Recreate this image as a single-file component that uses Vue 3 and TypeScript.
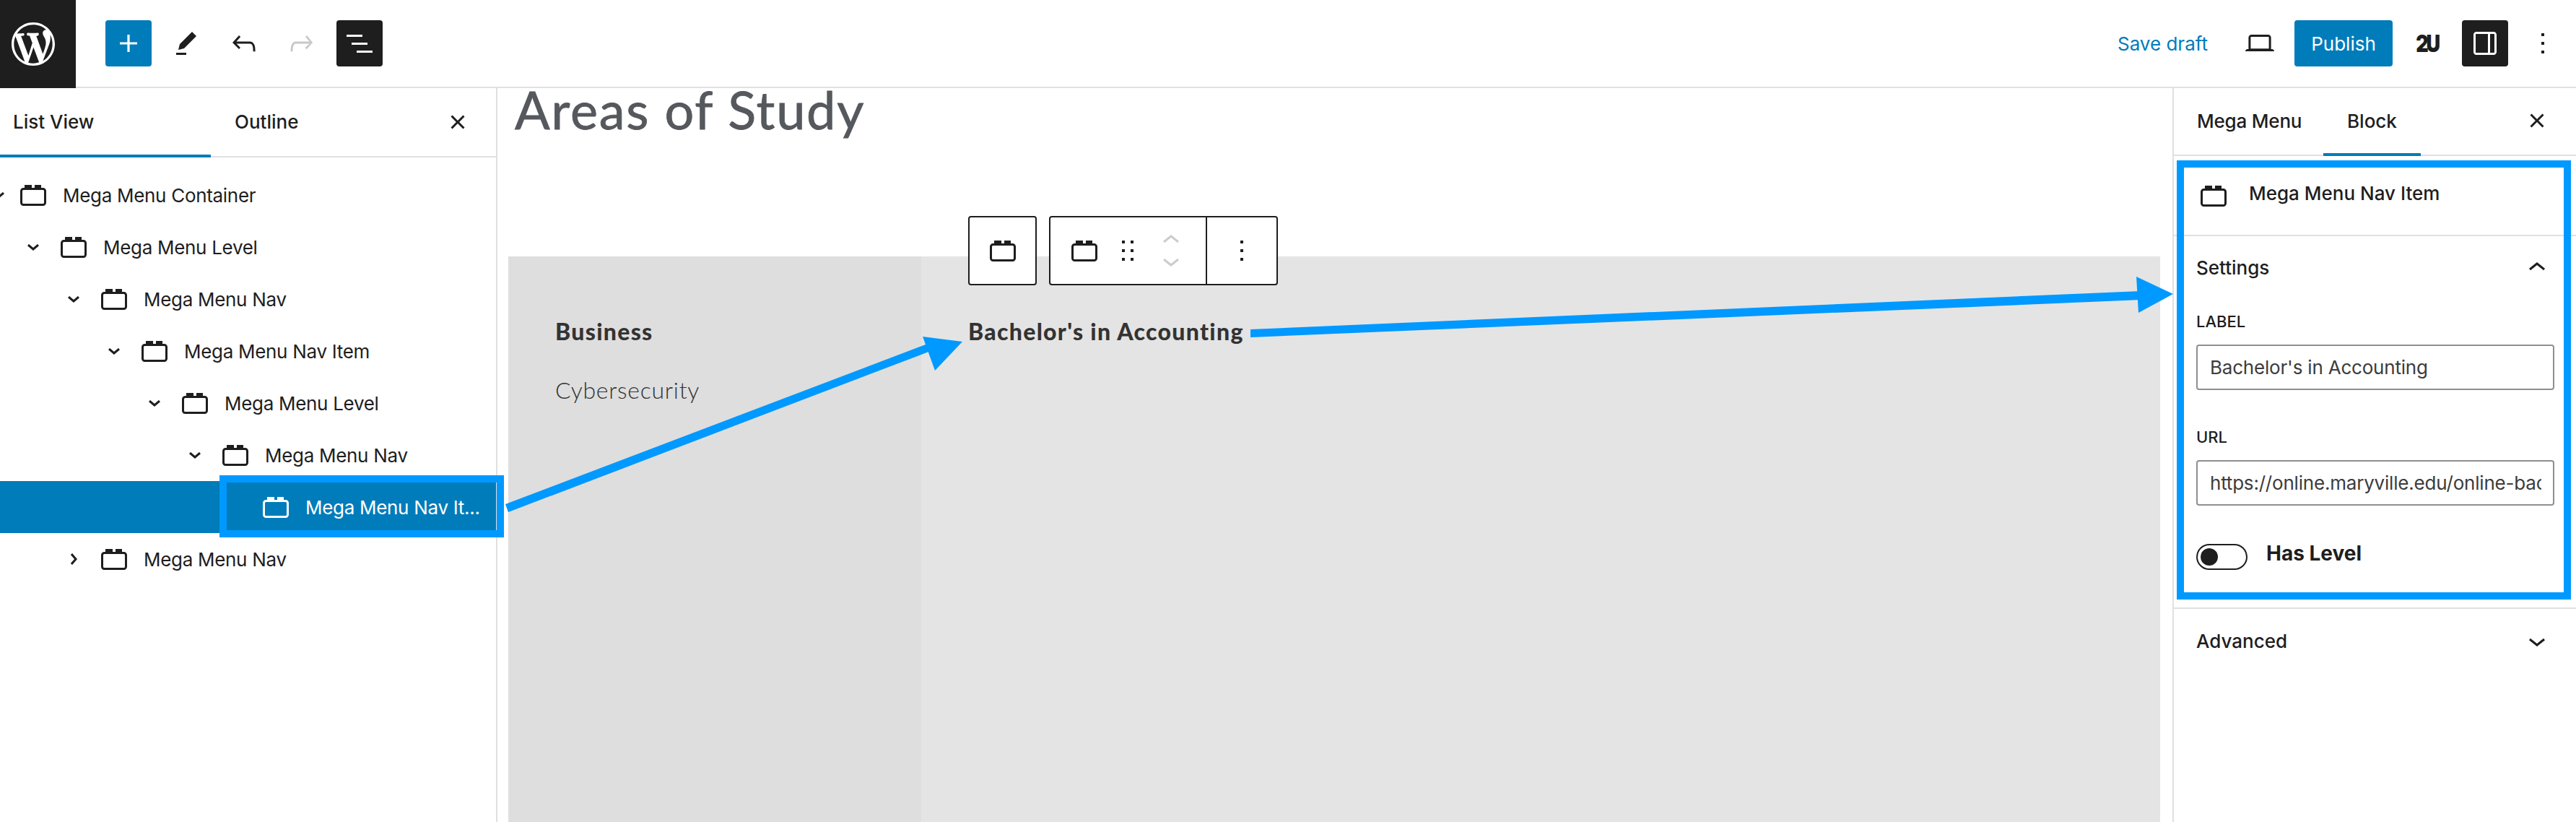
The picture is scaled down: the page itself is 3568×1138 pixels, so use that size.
<script setup lang="ts">
interface TreeRow {
  label: string
  depth: number
  chevron: 'down' | 'right' | null
  selected?: boolean
}

const rows: TreeRow[] = [
  { label: 'Mega Menu Container', depth: 0, chevron: 'down' },
  { label: 'Mega Menu Level', depth: 1, chevron: 'down' },
  { label: 'Mega Menu Nav', depth: 2, chevron: 'down' },
  { label: 'Mega Menu Nav Item', depth: 3, chevron: 'down' },
  { label: 'Mega Menu Level', depth: 4, chevron: 'down' },
  { label: 'Mega Menu Nav', depth: 5, chevron: 'down' },
  { label: 'Mega Menu Nav It...', depth: 6, chevron: null, selected: true },
  { label: 'Mega Menu Nav', depth: 2, chevron: 'right' }
]

// 56px indent per level, the first chevron hangs off the panel edge
const rowOffset = (depth: number) => `${56 * depth - 26}px`
</script>

<template>
  <div class="editor">
    <header class="topbar">
      <div class="logo">
        <svg viewBox="0 0 20 20" width="60" height="60" fill="#fff">
          <path d="M20 10c0-5.51-4.49-10-10-10C4.48 0 0 4.49 0 10c0 5.52 4.48 10 10 10 5.51 0 10-4.48 10-10zM7.78 15.37L4.37 6.22c.55-.02 1.17-.08 1.17-.08.5-.06.44-1.13-.06-1.11 0 0-1.45.11-2.37.11-.18 0-.37 0-.58-.01C4.12 2.69 6.87 1.11 10 1.11c2.33 0 4.45.87 6.05 2.34-.68-.11-1.65.39-1.65 1.58 0 .74.45 1.36.9 2.1.35.61.55 1.36.55 2.46 0 1.49-1.4 5-1.4 5l-3.03-8.37c.54-.02.82-.17.82-.17.5-.05.44-1.25-.06-1.22 0 0-1.44.12-2.38.12-.87 0-2.33-.12-2.33-.12-.5-.03-.56 1.2-.06 1.22l.92.08 1.26 3.41zM17.41 10c.24-.64.74-1.87.43-4.25.7 1.29 1.05 2.71 1.05 4.25 0 3.29-1.73 6.24-4.4 7.78.97-2.59 1.94-5.2 2.92-7.78zM6.1 18.09C3.12 16.65 1.11 13.53 1.11 10c0-1.3.23-2.48.72-3.59C3.25 10.3 4.67 14.2 6.1 18.09zm4.03-6.63l2.58 6.98c-.86.29-1.76.45-2.71.45-.79 0-1.57-.11-2.29-.33.81-2.38 1.62-4.74 2.42-7.1z" />
        </svg>
      </div>
      <div class="bar-left">
        <button class="icon-btn primary">
          <svg viewBox="0 0 24 24" width="48" height="48"><path d="M18 11.2h-5.2V6h-1.6v5.2H6v1.6h5.2V18h1.6v-5.2H18z" /></svg>
        </button>
        <button class="icon-btn">
          <svg viewBox="0 0 24 24" width="48" height="48"><path d="m19 7-3-3-8.5 8.5-1 4 4-1L19 7Zm-7 11.5H5V20h7v-1.5Z" /></svg>
        </button>
        <button class="icon-btn">
          <svg viewBox="0 0 24 24" width="48" height="48"><path d="M18.3 11.7c-.6-.6-1.4-.9-2.3-.9H6.7l2.9-3.3-1.1-1-4.5 5L8.5 16l1-1-2.7-2.7H16c.5 0 .9.2 1.3.5 1 1 1 3.4 1 4.5v.3h1.5v-.2c0-1.5 0-4.3-1.5-5.7z" /></svg>
        </button>
        <button class="icon-btn disabled">
          <svg viewBox="0 0 24 24" width="48" height="48"><path d="M15.6 6.5l-1.1 1 2.9 3.3H8c-.9 0-1.7.3-2.3.9-1.4 1.5-1.4 4.2-1.4 5.7v.2h1.5v-.3c0-1.1 0-3.5 1-4.5.3-.3.7-.5 1.3-.5h9.2L14.3 15l1.1 1.1 4.1-4.6-3.9-5z" /></svg>
        </button>
        <button class="icon-btn dark">
          <svg viewBox="0 0 24 24" width="48" height="48"><path d="M3 6h11v1.5H3V6Zm3.5 5.5h11V13h-11v-1.5ZM21 17H10v1.5h11V17Z" /></svg>
        </button>
      </div>
      <div class="bar-right">
        <button class="text-btn">Save draft</button>
        <button class="icon-btn">
          <svg viewBox="0 0 24 24" width="48" height="48"><path d="M20.5 16h-.7V8c0-1.1-.9-2-2-2H6.2c-1.1 0-2 .9-2 2v8h-.7c-.8 0-1.5.7-1.5 1.5h20c0-.8-.7-1.5-1.5-1.5zM5.7 8c0-.3.2-.5.5-.5h11.6c.3 0 .5.2.5.5v7.6H5.7V8z" /></svg>
        </button>
        <button class="publish">Publish</button>
        <button class="icon-btn brand"><span>2U</span></button>
        <button class="icon-btn dark">
          <svg viewBox="0 0 24 24" width="48" height="48"><path d="M18 4H6c-1.1 0-2 .9-2 2v12c0 1.1.9 2 2 2h12c1.1 0 2-.9 2-2V6c0-1.1-.9-2-2-2zm-4 14.5H6c-.3 0-.5-.2-.5-.5V6c0-.3.2-.5.5-.5h8v13zm4.5-.5c0 .3-.2.5-.5.5h-2.5v-13H18c.3 0 .5.2.5.5v12z" /></svg>
        </button>
        <button class="icon-btn">
          <svg viewBox="0 0 24 24" width="48" height="48"><path d="M13 19h-2v-2h2v2zm0-6h-2v-2h2v2zm0-6h-2V5h2v2z" /></svg>
        </button>
      </div>
    </header>

    <div class="workspace">
      <aside class="list-panel">
        <div class="panel-tabs">
          <div class="tab tab-list active">List View</div>
          <div class="tab tab-outline">Outline</div>
          <svg class="close" viewBox="0 0 24 24" width="48" height="48"><path d="M12 13.06l3.712 3.713 1.061-1.06L13.061 12l3.712-3.712-1.06-1.06L12 10.938 8.288 7.227l-1.061 1.06L10.939 12l-3.712 3.712 1.06 1.061L12 13.061z" /></svg>
        </div>
        <div class="tree">
          <div v-for="(row, i) in rows" :key="i" class="tree-row" :class="{ selected: row.selected }">
            <div class="tree-inner" :style="{ marginLeft: rowOffset(row.depth) }">
              <span class="chev-slot">
                <svg v-if="row.chevron === 'down'" viewBox="0 0 16 9" width="16" height="9">
                  <path d="M1 1l7 6 7-6" fill="none" stroke="currentColor" stroke-width="3" />
                </svg>
                <svg v-else-if="row.chevron === 'right'" viewBox="0 0 9 16" width="9" height="16">
                  <path d="M1 1l6 7-6 7" fill="none" stroke="currentColor" stroke-width="3" />
                </svg>
              </span>
              <svg class="block-icon" viewBox="0 0 36 29" width="36" height="29">
                <path d="M6 0h10v4H6zM20 0h9v4h-9z" fill="currentColor" />
                <rect x="1.5" y="5.5" width="33" height="22" rx="3" fill="none" stroke="currentColor" stroke-width="3" />
              </svg>
              <span class="tree-label">{{ row.label }}</span>
            </div>
          </div>
        </div>
      </aside>

      <main class="canvas">
        <h1 class="page-title">Areas of Study</h1>
        <div class="mega-block">
          <div class="col col-left">
            <p class="item strong">Business</p>
            <p class="item light">Cybersecurity</p>
          </div>
          <div class="col col-right">
            <p class="item strong">Bachelor's in Accounting</p>
          </div>
        </div>

        <div class="block-toolbar">
          <div class="tool-group tool-single">
            <svg class="block-icon" viewBox="0 0 36 29" width="36" height="29">
              <path d="M6 0h10v4H6zM20 0h9v4h-9z" fill="currentColor" />
              <rect x="1.5" y="5.5" width="33" height="22" rx="3" fill="none" stroke="currentColor" stroke-width="3" />
            </svg>
          </div>
          <div class="tool-group tool-main">
            <div class="tool-section">
              <svg class="block-icon" viewBox="0 0 36 29" width="36" height="29">
                <path d="M6 0h10v4H6zM20 0h9v4h-9z" fill="currentColor" />
                <rect x="1.5" y="5.5" width="33" height="22" rx="3" fill="none" stroke="currentColor" stroke-width="3" />
              </svg>
              <svg class="drag" viewBox="0 0 24 24" width="48" height="48"><path d="M8 7h2V5H8v2zm0 6h2v-2H8v2zm0 6h2v-2H8v2zm6-14v2h2V5h-2zm0 8h2v-2h-2v2zm0 6h2v-2h-2v2z" /></svg>
              <div class="movers">
                <svg viewBox="0 0 22 11" width="22" height="11"><path d="M1 10l10-8 10 8" fill="none" stroke="#ccc" stroke-width="3" /></svg>
                <svg viewBox="0 0 22 11" width="22" height="11"><path d="M1 1l10 8 10-8" fill="none" stroke="#ccc" stroke-width="3" /></svg>
              </div>
            </div>
            <div class="tool-more">
              <svg viewBox="0 0 24 24" width="48" height="48"><path d="M13 19h-2v-2h2v2zm0-6h-2v-2h2v2zm0-6h-2V5h2v2z" /></svg>
            </div>
          </div>
        </div>
      </main>

      <aside class="inspector">
        <div class="inspector-tabs">
          <div class="tab tab-menu">Mega Menu</div>
          <div class="tab tab-block active">Block</div>
          <svg class="close close-right" viewBox="0 0 24 24" width="48" height="48"><path d="M12 13.06l3.712 3.713 1.061-1.06L13.061 12l3.712-3.712-1.06-1.06L12 10.938 8.288 7.227l-1.061 1.06L10.939 12l-3.712 3.712 1.06 1.061L12 13.061z" /></svg>
        </div>
        <div class="block-card">
          <svg class="block-icon" viewBox="0 0 36 29" width="36" height="29">
            <path d="M6 0h10v4H6zM20 0h9v4h-9z" fill="currentColor" />
            <rect x="1.5" y="5.5" width="33" height="22" rx="3" fill="none" stroke="currentColor" stroke-width="3" />
          </svg>
          <span class="card-title">Mega Menu Nav Item</span>
        </div>
        <section class="settings">
          <div class="section-head settings-head">
            <span>Settings</span>
            <svg viewBox="0 0 24 24" width="48" height="48"><path d="M6.5 12.4L12 8l5.5 4.4-.9 1.2L12 10l-4.5 3.6-1-1.2z" /></svg>
          </div>
          <label class="field-label">Label</label>
          <div class="field-input"><span class="field-value">Bachelor's in Accounting</span></div>
          <label class="field-label second">URL</label>
          <div class="field-input"><span class="field-value">https://online.maryville.edu/online-bachelors</span></div>
          <div class="toggle-row">
            <span class="toggle"><span class="thumb"></span></span>
            <span class="toggle-label">Has Level</span>
          </div>
        </section>
        <div class="section-head advanced">
          <span>Advanced</span>
          <svg viewBox="0 0 24 24" width="48" height="48"><path d="M17.5 11.6L12 16l-5.5-4.4.9-1.2L12 14l4.5-3.6 1 1.2z" /></svg>
        </div>
      </aside>
    </div>

    <!-- annotations drawn on top of the screenshot -->
    <div class="mark mark-row"></div>
    <div class="mark mark-panel"></div>
    <svg class="arrows" viewBox="0 0 3568 1138" width="3568" height="1138">
      <g fill="#0099ff">
        <path d="M700 698l590-224 4 10-590 225z" />
        <path d="M1278 466l55 7-38 40z" />
        <path d="M1732 456L2965 403v12L1732 467z" />
        <path d="M2959 383l51 24-48 26z" />
      </g>
    </svg>
  </div>
</template>

<style scoped>
.editor {
  position: relative;
  width: 3568px;
  height: 1138px;
  overflow: hidden;
  display: flex;
  flex-direction: column;
  background: #fff;
  color: #1e1e1e;
  font-family: Inter, "Liberation Sans", sans-serif;
  font-size: 26px;
}

.topbar {
  flex: none;
  height: 122px;
  box-sizing: border-box;
  display: flex;
  align-items: flex-start;
  border-bottom: 2px solid #e0e0e0;
}

.logo {
  width: 105px;
  height: 122px;
  box-sizing: border-box;
  padding-right: 14px;
  background: #1e1e1e;
  display: flex;
  align-items: center;
  justify-content: center;
}

.bar-left,
.bar-right {
  display: flex;
  gap: 16px;
  padding-top: 28px;
}

.bar-left {
  margin-left: 41px;
}

.bar-right {
  margin-left: auto;
  padding-right: 14px;
}

button {
  border: 0;
  padding: 0;
  background: none;
  font: inherit;
  color: inherit;
}

.icon-btn {
  width: 64px;
  height: 64px;
  border-radius: 4px;
  display: flex;
  align-items: center;
  justify-content: center;
  fill: #1e1e1e;
}

.icon-btn.primary {
  background: #007cba;
  fill: #fff;
}

.icon-btn.dark {
  background: #1e1e1e;
  fill: #fff;
}

.icon-btn.disabled {
  fill: #c8c8c8;
}

.icon-btn.brand span {
  display: block;
  font-weight: 900;
  font-size: 33px;
  letter-spacing: -4px;
  transform: scaleX(0.82);
}

.text-btn {
  height: 64px;
  padding: 0 24px;
  color: #007cba;
}

.publish {
  width: 136px;
  height: 64px;
  border-radius: 4px;
  background: #007cba;
  color: #fff;
}

.workspace {
  flex: 1;
  min-height: 0;
  display: flex;
}

.list-panel {
  flex: none;
  width: 689px;
  box-sizing: border-box;
  border-right: 2px solid #e0e0e0;
}

.panel-tabs {
  position: relative;
  height: 96px;
  box-sizing: border-box;
  display: flex;
  border-bottom: 2px solid #e0e0e0;
}

.tab {
  height: 96px;
  box-sizing: border-box;
  line-height: 94px;
  font-weight: 500;
}

.tab.active {
  border-bottom: 4px solid #007cba;
}

.tab-list {
  width: 292px;
  padding-left: 18px;
}

.tab-outline {
  padding-left: 33px;
}

.close {
  position: absolute;
  top: 23px;
  left: 610px;
  fill: #1e1e1e;
}

.tree {
  padding-top: 16px;
}

.tree-row {
  height: 72px;
  overflow: hidden;
}

.tree-row:first-child .chev-slot {
  transform: translateX(8px);
}

.tree-row.selected {
  background: #007cba;
  color: #fff;
}

.tree-inner {
  height: 72px;
  display: flex;
  align-items: center;
}

.chev-slot {
  flex: none;
  width: 32px;
  height: 20px;
  display: flex;
  align-items: center;
  justify-content: center;
}

.block-icon {
  flex: none;
  color: inherit;
}

.tree-inner .block-icon {
  margin-left: 22px;
}

.tree-label {
  margin-left: 23px;
  white-space: nowrap;
  letter-spacing: -0.3px;
}

.canvas {
  position: relative;
  flex: 1;
  min-width: 0;
  overflow: hidden;
}

.page-title {
  margin: -14px 0 0 24px;
  height: 247px;
  font-family: Lato, "Liberation Sans", sans-serif;
  font-size: 72px;
  font-weight: 400;
  line-height: 86px;
  letter-spacing: 1.8px;
  -webkit-text-stroke: 0.8px #55585c;
  color: #55585c;
}

.mega-block {
  margin: 0 17px 0 15px;
  height: 800px;
  display: grid;
  grid-template-columns: 572px 1fr;
  font-family: Lato, "Liberation Sans", sans-serif;
  font-size: 32px;
  color: #333;
}

.col {
  padding: 84px 0 0 65px;
}

.col-left {
  background: #dedede;
}

.col-right {
  background: #e4e4e4;
}

.item {
  margin: 0 0 41px;
  height: 40px;
  line-height: 40px;
}

.strong {
  font-weight: 900;
  letter-spacing: 1.3px;
}

.light {
  font-weight: 300;
  letter-spacing: 0.7px;
}

.block-toolbar {
  position: absolute;
  top: 177px;
  left: 652px;
  display: flex;
  gap: 17px;
}

.tool-group {
  height: 96px;
  box-sizing: border-box;
  border: 2px solid #1e1e1e;
  border-radius: 4px;
  background: #fff;
  display: flex;
  align-items: center;
}

.tool-single {
  width: 95px;
  justify-content: center;
}

.tool-main {
  width: 317px;
}

.tool-section {
  width: 217px;
  height: 100%;
  box-sizing: border-box;
  padding-left: 29px;
  display: flex;
  align-items: center;
  border-right: 2px solid #1e1e1e;
}

.drag {
  margin-left: 18px;
  fill: #1e1e1e;
}

.movers {
  margin-left: 25px;
  display: flex;
  flex-direction: column;
  gap: 22px;
}

.movers svg {
  display: block;
}

.tool-more {
  flex: 1;
  display: flex;
  justify-content: center;
  fill: #1e1e1e;
}

.inspector {
  flex: none;
  width: 559px;
  box-sizing: border-box;
  border-left: 2px solid #e0e0e0;
}

.inspector-tabs {
  position: relative;
  height: 94px;
  box-sizing: border-box;
  display: flex;
  border-bottom: 2px solid #e0e0e0;
}

.inspector-tabs .tab {
  height: 94px;
  line-height: 92px;
}

.tab-menu {
  width: 207px;
  padding-left: 32px;
  letter-spacing: -0.2px;
}

.tab-block {
  padding: 0 33px;
}

.close-right {
  left: 479px;
  top: 21px;
}

.block-card {
  height: 111px;
  box-sizing: border-box;
  padding: 41px 0 0 37px;
  display: flex;
  align-items: flex-start;
  gap: 31px;
  border-bottom: 2px solid #e0e0e0;
}

.card-title {
  margin-top: -5px;
  line-height: 32px;
  font-weight: 500;
}

.settings {
  height: 516px;
  box-sizing: border-box;
  padding: 0 30px 0 31px;
  border-bottom: 2px solid #e0e0e0;
}

.section-head {
  height: 88px;
  display: flex;
  align-items: center;
  justify-content: space-between;
  font-weight: 500;
  fill: #1e1e1e;
}

.settings-head {
  height: 86px;
}

.settings-head svg {
  margin-top: 2px;
}

.advanced {
  padding: 0 30px 0 31px;
}

.field-label {
  display: block;
  margin-top: 20px;
  height: 24px;
  line-height: 24px;
  font-size: 22px;
  font-weight: 500;
  text-transform: uppercase;
}

.field-label.second {
  margin-top: 53px;
}

.field-input {
  margin-top: 20px;
  height: 63px;
  box-sizing: border-box;
  padding: 0 16px 0 17px;
  border: 2px solid #8f8f8f;
  border-radius: 4px;
  line-height: 59px;
  color: #3c3c3c;
  letter-spacing: -0.2px;
}

.field-value {
  display: block;
  white-space: nowrap;
  overflow: hidden;
}

.toggle-row {
  margin-top: 53px;
  display: flex;
  align-items: flex-start;
  gap: 26px;
}

.toggle {
  flex: none;
  width: 71px;
  height: 36px;
  box-sizing: border-box;
  border: 2px solid #1e1e1e;
  border-radius: 18px;
  display: flex;
  align-items: center;
  padding-left: 4px;
}

.thumb {
  width: 24px;
  height: 24px;
  border-radius: 50%;
  background: #1e1e1e;
}

.toggle-label {
  margin-top: -3px;
  line-height: 32px;
  font-size: 28px;
  font-weight: 700;
}

.mark {
  position: absolute;
  box-sizing: border-box;
  border: 10px solid #0099ff;
  pointer-events: none;
}

.mark-row {
  left: 304px;
  top: 658px;
  width: 394px;
  height: 86px;
}

.mark-panel {
  left: 3015px;
  top: 222px;
  width: 546px;
  height: 608px;
}

.arrows {
  position: absolute;
  left: 0;
  top: 0;
  pointer-events: none;
}
</style>

<style>
html,
body {
  margin: 0;
  overflow: hidden;
}
</style>
